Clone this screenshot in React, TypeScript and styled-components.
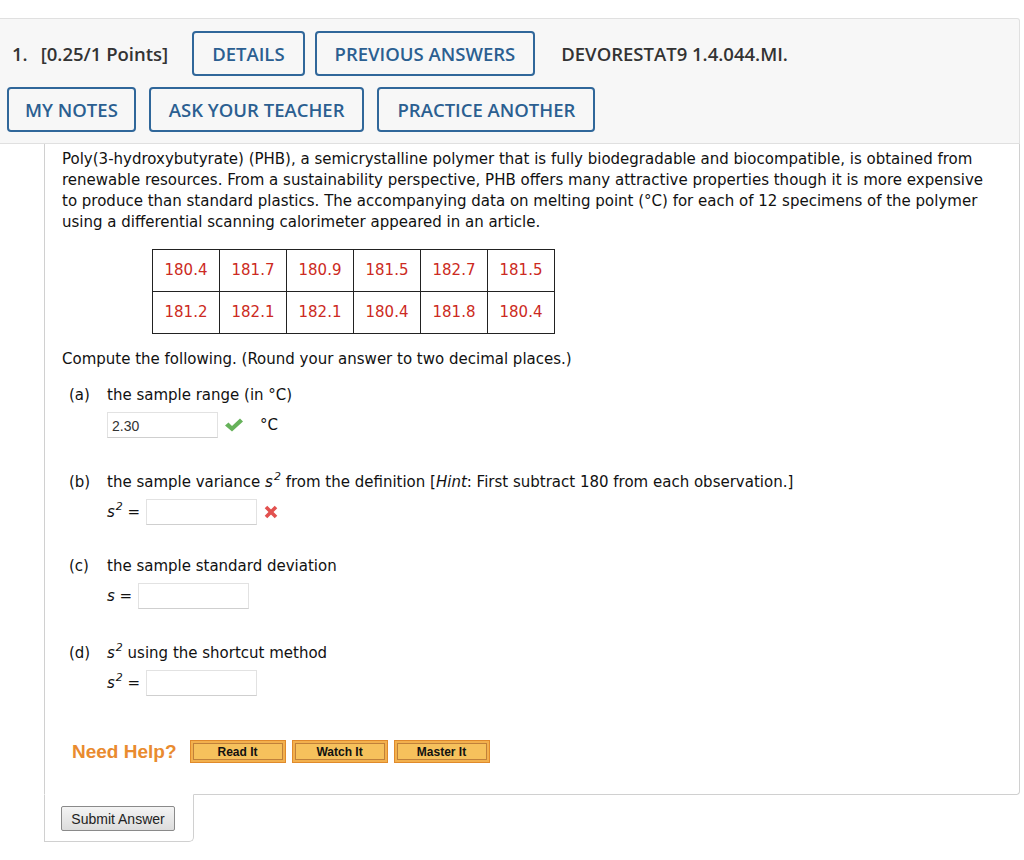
import styled, { createGlobalStyle } from 'styled-components';

const GlobalStyle = createGlobalStyle`
  body {
    margin: 0;
    background: #fff;
    font-family: "DejaVu Sans", Verdana, sans-serif;
  }
`;

const Page = styled.div`
  width: 1024px;
  padding-top: 18px;
`;

const Header = styled.div`
  width: 1020px;
  box-sizing: border-box;
  background: #f7f7f7;
  border: 1px solid #e0e0e0;
  border-left: none;
  border-top-right-radius: 3px;
  padding: 12px 0 11px;
  display: flex;
  flex-direction: column;
  gap: 11px;
  font-family: "Open Sans", sans-serif;
`;

const HeaderRow = styled.div<{ $indent: number; $gap: number }>`
  display: flex;
  align-items: center;
  padding-left: ${p => p.$indent}px;
  gap: ${p => p.$gap}px;
`;

const QuestionTitle = styled.div`
  font-size: 18.5px;
  font-weight: 600;
  color: #333;
  margin-right: 14px;
  span {
    margin-right: 13px;
  }
`;

const QuestionCode = styled.div`
  font-size: 18.5px;
  font-weight: 600;
  color: #333;
  margin-left: 16px;
`;

const OutlineButton = styled.button<{ $pad?: number }>`
  height: 45px;
  box-sizing: border-box;
  padding: 0 ${p => p.$pad ?? 18}px;
  background: #f7f7f7;
  border: 2px solid #30679a;
  border-radius: 4px;
  color: #2b5f91;
  font-family: "Open Sans", sans-serif;
  font-size: 18.5px;
  font-weight: 600;
  cursor: pointer;
`;

const Panel = styled.div`
  margin-left: 44px;
  width: 976px;
  box-sizing: border-box;
  border: 1px solid #d0d0d0;
  border-top: none;
  border-bottom-right-radius: 4px;
  padding: 5px 20px 31px 17px;
  font-size: 15px;
  line-height: 21px;
  color: #111;
  sup {
    font-size: 11px;
    line-height: 0;
    vertical-align: baseline;
    position: relative;
    top: -0.6em;
    margin-left: 1px;
  }
`;

const Prose = styled.p`
  margin: 0;
`;

const DataTable = styled.table`
  margin: 16px 0 0 90px;
  border-collapse: collapse;
`;

const DataCell = styled.td`
  width: 66px;
  height: 41px;
  padding: 0;
  border: 1px solid #222;
  text-align: center;
  color: #cc2a22;
`;

const Lead = styled.p`
  margin: 15px 0 0;
`;

const Part = styled.div<{ $top: number }>`
  margin-top: ${p => p.$top}px;
  display: grid;
  grid-template-columns: 38px 1fr;
  padding-left: 7px;
`;

const PartLetter = styled.span``;

const PartBody = styled.div``;

const AnswerRow = styled.div`
  display: flex;
  align-items: center;
  margin-top: 6px;
  height: 26px;
`;

const Symbol = styled.span`
  margin-right: 6px;
`;

const AnswerBox = styled.input`
  width: 111px;
  height: 26px;
  box-sizing: border-box;
  border: 1px solid #e2e2e2;
  border-bottom-color: #cfcfcf;
  padding: 2px 4px 0;
  font-family: "Liberation Sans", Arial, sans-serif;
  font-size: 14px;
  color: #333;
  outline: none;
`;

const Mark = styled.span`
  display: inline-flex;
  margin-left: 6px;
`;

const Unit = styled.span`
  margin-left: 16px;
`;

const HelpRow = styled.div`
  display: flex;
  align-items: center;
  margin-top: 44px;
  padding-left: 10px;
`;

const HelpLabel = styled.span`
  font-family: "Liberation Sans", Arial, sans-serif;
  font-weight: bold;
  font-size: 19px;
  color: #e98b2f;
  margin-right: 13px;
`;

const HelpButton = styled.button`
  width: 96px;
  height: 23px;
  margin-right: 6px;
  box-sizing: border-box;
  background: #f6c15c;
  border: 1px solid #e08a2b;
  box-shadow: inset 0 0 0 2px #f2b04d, inset 0 0 0 3px #c0803a;
  font-family: "Liberation Sans", Arial, sans-serif;
  font-weight: bold;
  font-size: 12px;
  color: #111;
  padding: 0;
  cursor: pointer;
`;

const SubmitTab = styled.div`
  margin-left: 44px;
  margin-top: -1px;
  width: 150px;
  height: 48px;
  box-sizing: border-box;
  background: #fff;
  border: 1px solid #d0d0d0;
  border-top: 1px solid #fff;
  border-bottom-right-radius: 5px;
  padding: 11px 0 0 16px;
`;

const SubmitButton = styled.button`
  width: 114px;
  height: 25px;
  padding: 0;
  border: 1px solid #8a8a8a;
  border-radius: 2px;
  background: linear-gradient(#f4f4f4, #dcdcdc);
  font-family: "Liberation Sans", Arial, sans-serif;
  font-size: 14px;
  color: #222;
  cursor: pointer;
`;

const rows = [
  ['180.4', '181.7', '180.9', '181.5', '182.7', '181.5'],
  ['181.2', '182.1', '182.1', '180.4', '181.8', '180.4'],
];

function Check() {
  return (
    <svg width="20" height="16" viewBox="0 0 20 16">
      <path d="M1 8.5 L4.5 5.5 L8 9 L16 1.5 L19 4.5 L8 14.5 Z" fill="#66b25a" />
    </svg>
  );
}

function Cross() {
  return (
    <svg width="16" height="16" viewBox="0 0 16 16">
      <path d="M3 3 L13 13 M13 3 L3 13" stroke="#e2514f" strokeWidth="3.6" strokeLinecap="butt" />
    </svg>
  );
}

function Sq() {
  return (
    <i>
      s<sup>2</sup>
    </i>
  );
}

export default function App() {
  return (
    <Page>
      <GlobalStyle />
      <Header>
        <HeaderRow $indent={12} $gap={10}>
          <QuestionTitle>
            <span>1.</span>[0.25/1 Points]
          </QuestionTitle>
          <OutlineButton>DETAILS</OutlineButton>
          <OutlineButton>PREVIOUS ANSWERS</OutlineButton>
          <QuestionCode>DEVORESTAT9 1.4.044.MI.</QuestionCode>
        </HeaderRow>
        <HeaderRow $indent={7} $gap={13}>
          <OutlineButton $pad={16}>MY NOTES</OutlineButton>
          <OutlineButton>ASK YOUR TEACHER</OutlineButton>
          <OutlineButton>PRACTICE ANOTHER</OutlineButton>
        </HeaderRow>
      </Header>

      <Panel>
        <Prose>
          Poly(3-hydroxybutyrate) (PHB), a semicrystalline polymer that is fully biodegradable and
          biocompatible, is obtained from renewable resources. From a sustainability perspective, PHB
          offers many attractive properties though it is more expensive to produce than standard
          plastics. The accompanying data on melting point (°C) for each of 12 specimens of the polymer
          using a differential scanning calorimeter appeared in an article.
        </Prose>

        <DataTable>
          <tbody>
            {rows.map((r, i) => (
              <tr key={i}>
                {r.map((v, j) => (
                  <DataCell key={j}>{v}</DataCell>
                ))}
              </tr>
            ))}
          </tbody>
        </DataTable>

        <Lead>Compute the following. (Round your answer to two decimal places.)</Lead>

        <Part $top={15}>
          <PartLetter>(a)</PartLetter>
          <PartBody>
            the sample range (in °C)
            <AnswerRow>
              <AnswerBox defaultValue="2.30" />
              <Mark>
                <Check />
              </Mark>
              <Unit>°C</Unit>
            </AnswerRow>
          </PartBody>
        </Part>

        <Part $top={34}>
          <PartLetter>(b)</PartLetter>
          <PartBody>
            the sample variance <Sq /> from the definition [<i>Hint</i>: First subtract 180 from each
            observation.]
            <AnswerRow>
              <Symbol>
                <Sq /> =
              </Symbol>
              <AnswerBox />
              <Mark>
                <Cross />
              </Mark>
            </AnswerRow>
          </PartBody>
        </Part>

        <Part $top={31}>
          <PartLetter>(c)</PartLetter>
          <PartBody>
            the sample standard deviation
            <AnswerRow>
              <Symbol>
                <i>s</i> =
              </Symbol>
              <AnswerBox />
            </AnswerRow>
          </PartBody>
        </Part>

        <Part $top={34}>
          <PartLetter>(d)</PartLetter>
          <PartBody>
            <Sq /> using the shortcut method
            <AnswerRow>
              <Symbol>
                <Sq /> =
              </Symbol>
              <AnswerBox />
            </AnswerRow>
          </PartBody>
        </Part>

        <HelpRow>
          <HelpLabel>Need Help?</HelpLabel>
          <HelpButton>Read It</HelpButton>
          <HelpButton>Watch It</HelpButton>
          <HelpButton>Master It</HelpButton>
        </HelpRow>
      </Panel>

      <SubmitTab>
        <SubmitButton>Submit Answer</SubmitButton>
      </SubmitTab>
    </Page>
  );
}
